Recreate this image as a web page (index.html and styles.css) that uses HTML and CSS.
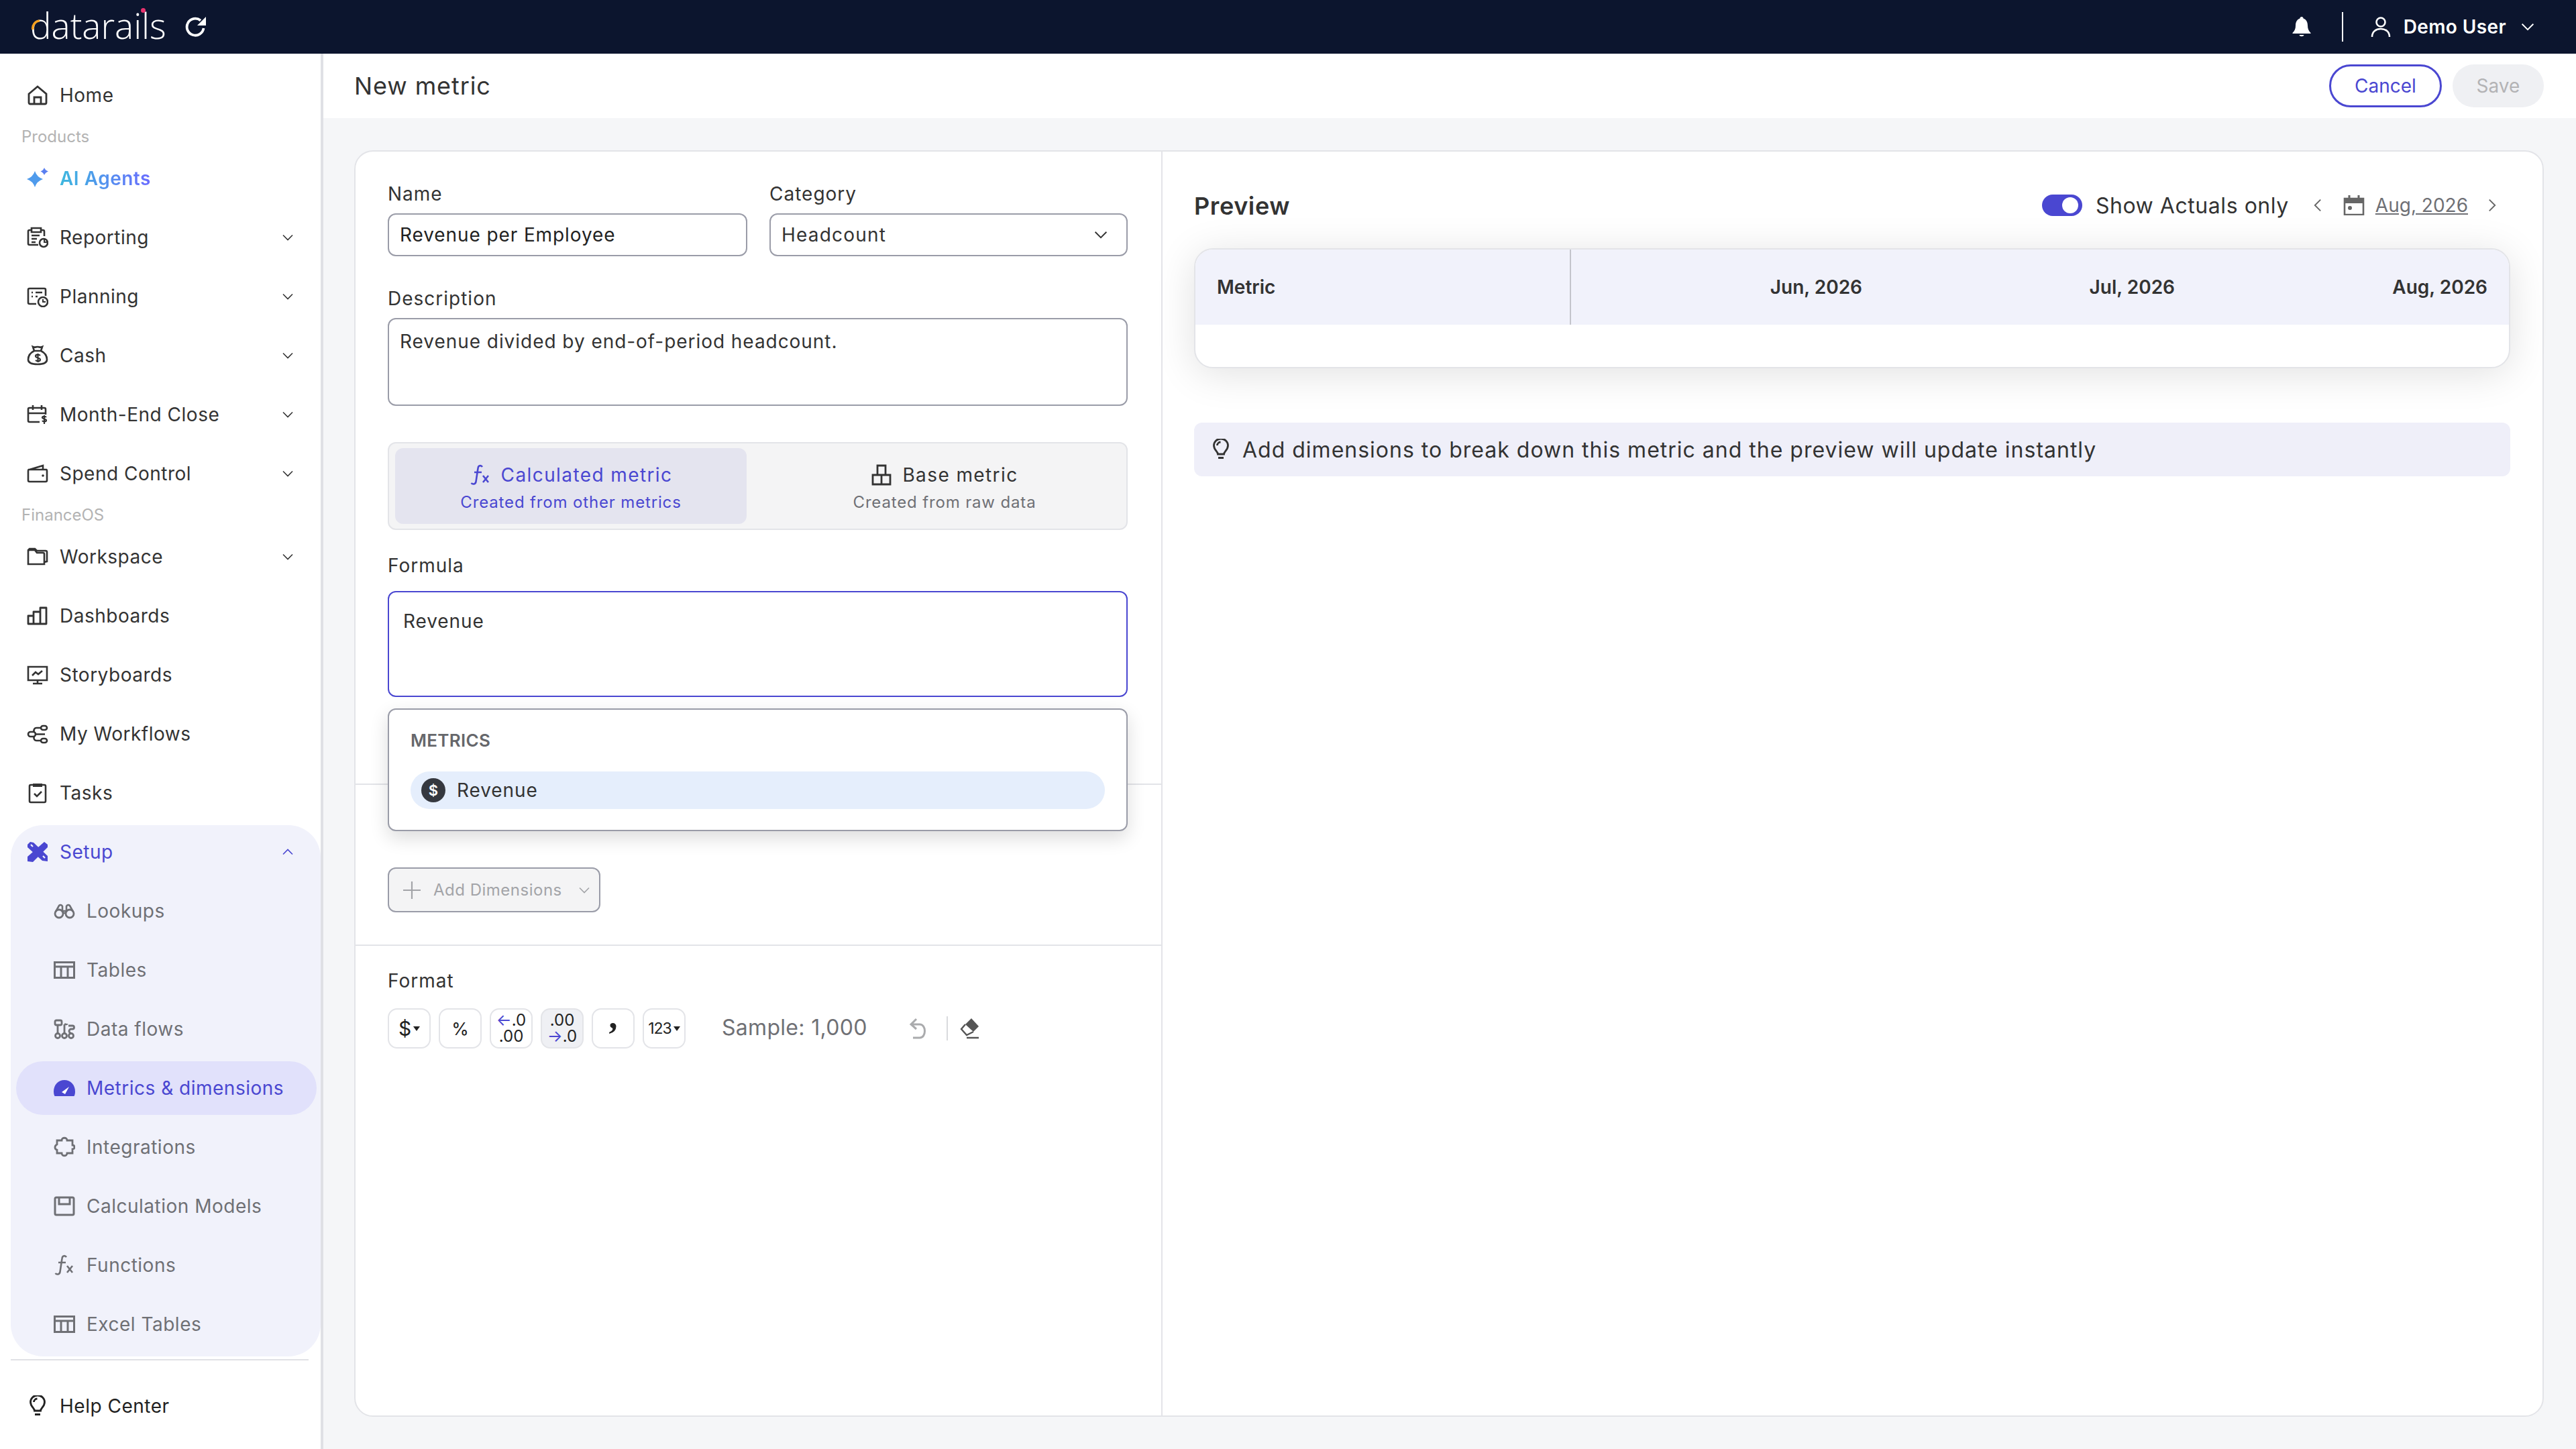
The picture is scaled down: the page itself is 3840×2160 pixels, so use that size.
FILE: index.html
```html
<!DOCTYPE html>
<html>
<head>
    <title>New metric</title>
    <link rel="stylesheet" href="styles.css">
</head>
<body>
    <svg class="defs" width="0" height="0">
        <defs>
            <symbol id="chev" viewBox="0 0 16 10"><path d="M1 1.500l7 7 7-7" fill="none" stroke="currentColor" stroke-width="1.600"/></symbol>
            <symbol id="table" viewBox="0 0 32 26"><path d="M1.500 1.500h29v23h-29zM1.500 8h29M11 8v16.500M21 8v16.500" fill="none" stroke="currentColor" stroke-width="3"/></symbol>
            <symbol id="fx" viewBox="0 0 32 32"><path d="M19 4c-2-3-6-2.500-6.500 2L9.500 26c-.6 4-5 4.500-7 2M7 12h11M20 17l8 10M28 17l-8 10" fill="none" stroke="currentColor" stroke-width="2.600"/></symbol>
            <symbol id="bulb" viewBox="0 0 24 32"><path d="M7.500 23c0-4-6-6-6-13a10.500 10 0 0 1 21 0c0 7-6 9-6 13zM8 28.500h8M6.500 10a5.500 5 0 0 1 5-5" fill="none" stroke="currentColor" stroke-width="2.800"/></symbol>
        </defs>
    </svg>

    <!-- Top bar -->
    <header class="topbar">
        <div class="logo">
            <span class="logo-word">datarails</span>
            <svg class="logo-arc" width="18" height="18" viewBox="0 0 18 18"><path d="M2 16a11 11 0 0 1 10-13" fill="none" stroke="#f5a01e" stroke-width="3.500"/></svg>
            <span class="logo-dot"></span>
            <svg class="logo-spin" width="32" height="32" viewBox="0 0 32 32"><path d="M27.500 18A12.500 12.500 0 1 1 23 6.500" fill="none" stroke="#fff" stroke-width="3.800"/><path d="M31 1v13H18z" fill="#fff"/></svg>
        </div>
        <div class="topbar-right">
            <svg class="bell" width="28" height="32" viewBox="0 0 28 32"><path d="M14 1c1.500 0 2.500 1 2.600 2.500C21 5 23 9 23 14c0 5 1.500 8 4.500 11v1H.5v-1C3.500 22 5 19 5 14c0-5 2-9 6.400-10.500C11.500 2 12.500 1 14 1zM10.500 28h7c-.5 3-6.500 3-7 0z" fill="#fff"/></svg>
            <span class="topbar-sep"></span>
            <svg class="user-icon" width="30" height="32" viewBox="0 0 30 32"><circle cx="15" cy="9" r="6.500" fill="none" stroke="#fff" stroke-width="2.600"/><path d="M2 31c0-8 6-12 13-12s13 4 13 12" fill="none" stroke="#fff" stroke-width="2.600"/></svg>
            <span class="user-name">Demo User</span>
            <svg class="user-chev"><use href="#chev"/></svg>
        </div>
    </header>

    <div class="app">
        <!-- Side menu -->
        <nav class="sidebar">
            <a class="nav-row">
                <svg class="ico" viewBox="0 0 32 32"><path d="M3 14L16 3l13 11v13a2 2 0 0 1-2 2H5a2 2 0 0 1-2-2zM11 29V19h10v10" fill="none" stroke="currentColor" stroke-width="2.800"/></svg>
                <span>Home</span>
            </a>
            <div class="nav-label">Products</div>
            <a class="nav-row ai">
                <svg class="ico" viewBox="0 0 32 32"><path d="M12 5Q15 14 24 17 15 20 12 29 9 20 0 17 9 14 12 5z" fill="#4f9bec"/><path d="M26 0q1.500 4 6 5.500-4.500 1.500-6 5.500-1.500-4-5.500-5.500Q24.500 4 26 0z" fill="#5a7ff0"/></svg>
                <span class="ai-text">AI Agents</span>
            </a>
            <a class="nav-row">
                <svg class="ico" viewBox="0 0 32 32"><path d="M17 27H4a2 2 0 0 1-2-2V7a2 2 0 0 1 2-2h3M21 5h3a2 2 0 0 1 2 2v7M7 2h14v6H7zM7 13h12M7 18h8M7 23h6" fill="none" stroke="currentColor" stroke-width="2.600"/><circle cx="25" cy="24" r="6" fill="none" stroke="currentColor" stroke-width="2.600"/><path d="M25 24h6v-2h-4v-4h-2z" fill="currentColor"/></svg>
                <span>Reporting</span>
                <svg class="chev"><use href="#chev"/></svg>
            </a>
            <a class="nav-row">
                <svg class="ico" viewBox="0 0 32 32"><path d="M14 27H4a2 2 0 0 1-2-2V6a2 2 0 0 1 2-2h22a2 2 0 0 1 2 2v9M7 10h2M13 10h10M7 16h2M13 16h3" fill="none" stroke="currentColor" stroke-width="2.600"/><circle cx="24" cy="24" r="7" fill="none" stroke="currentColor" stroke-width="2.600"/><path d="M24 20v4h4" fill="none" stroke="currentColor" stroke-width="2"/></svg>
                <span>Planning</span>
                <svg class="chev"><use href="#chev"/></svg>
            </a>
            <a class="nav-row">
                <svg class="ico" viewBox="0 0 32 32"><path d="M11 9L9 3c3 1.500 4 0 7 0s4 1.500 7 0l-2 6M11 9h10M11 9C5 12 2 17 2 22c0 5 4 7 14 7s14-2 14-7c0-5-3-10-9-13" fill="none" stroke="currentColor" stroke-width="2.600"/><path d="M20 16c-2-2-7-2-7 1s7 2 7 5-5 3-7 1M16.500 13v13" fill="none" stroke="currentColor" stroke-width="2.200"/></svg>
                <span>Cash</span>
                <svg class="chev"><use href="#chev"/></svg>
            </a>
            <a class="nav-row">
                <svg class="ico" viewBox="0 0 32 32"><path d="M19 27H4a2 2 0 0 1-2-2V8a2 2 0 0 1 2-2h22a2 2 0 0 1 2 2v8M2 14h26M9 2v7M22 2v7" fill="none" stroke="currentColor" stroke-width="2.600"/><path d="M29 20c-2-2-6-1.500-6 .5s6 1.500 6 4-5 2.500-6 .5M26 17v13" fill="none" stroke="currentColor" stroke-width="2.200"/></svg>
                <span>Month-End Close</span>
                <svg class="chev"><use href="#chev"/></svg>
            </a>
            <a class="nav-row">
                <svg class="ico" viewBox="0 0 32 32"><path d="M4 10l20-6v6M3 10h26a2 2 0 0 1 1 2v14a2 2 0 0 1-2 2H4a2 2 0 0 1-2-2V12a2 2 0 0 1 1-2z" fill="none" stroke="currentColor" stroke-width="2.600"/><circle cx="24" cy="19" r="1.800" fill="currentColor"/></svg>
                <span>Spend Control</span>
                <svg class="chev"><use href="#chev"/></svg>
            </a>
            <div class="nav-label">FinanceOS</div>
            <a class="nav-row">
                <svg class="ico" viewBox="0 0 32 32"><path d="M2 27V8a2 2 0 0 1 2-2h8l3 4h9a2 2 0 0 1 2 2v15zM2 8V6l2-2h8l3 3h13a2 2 0 0 1 2 2v14l-4 1" fill="none" stroke="currentColor" stroke-width="2.600"/></svg>
                <span>Workspace</span>
                <svg class="chev"><use href="#chev"/></svg>
            </a>
            <a class="nav-row">
                <svg class="ico" viewBox="0 0 32 32"><path d="M2 16h8v12H2zM10 10h10v18H10zM20 4h9v24h-9z" fill="none" stroke="currentColor" stroke-width="2.800" stroke-linejoin="round"/></svg>
                <span>Dashboards</span>
            </a>
            <a class="nav-row">
                <svg class="ico" viewBox="0 0 32 32"><path d="M2 4h28v20H2zM16 24v5M9 29h14M8 17l5-5 4 3 6-5" fill="none" stroke="currentColor" stroke-width="2.600"/></svg>
                <span>Storyboards</span>
            </a>
            <a class="nav-row">
                <svg class="ico" viewBox="0 0 32 32"><rect x="21" y="4" width="9" height="6" rx="3" fill="none" stroke="currentColor" stroke-width="2.600"/><rect x="21" y="23" width="9" height="6" rx="3" fill="none" stroke="currentColor" stroke-width="2.600"/><rect x="2" y="13" width="11" height="7" rx="3.500" fill="none" stroke="currentColor" stroke-width="2.600"/><path d="M21 7h-6a4 4 0 0 0-4 6M21 26h-6a4 4 0 0 1-4-6M13 16.500h14" fill="none" stroke="currentColor" stroke-width="2.600"/></svg>
                <span>My Workflows</span>
            </a>
            <a class="nav-row">
                <svg class="ico" viewBox="0 0 32 32"><path d="M6 4h20a2 2 0 0 1 2 2v22a2 2 0 0 1-2 2H6a2 2 0 0 1-2-2V6a2 2 0 0 1 2-2zM11 17l4 4 7-7" fill="none" stroke="currentColor" stroke-width="2.600"/><path d="M9 2h14v5H9z" fill="currentColor"/></svg>
                <span>Tasks</span>
            </a>

            <div class="setup">
                <a class="nav-row setup-head">
                    <svg class="ico" viewBox="0 0 32 32"><path d="M5 1l5 1 21 20v8l-8-1L1 9V5z" fill="#4a47d1"/><path d="M26 1l5 4v4L9 31l-8-1v-7z" fill="#4a47d1"/><path d="M6 5l3 3M24 22l3 3" stroke="#f1f2fb" stroke-width="2.200"/></svg>
                    <span>Setup</span>
                    <svg class="chev up"><use href="#chev"/></svg>
                </a>
                <a class="sub-row">
                    <svg class="ico" viewBox="0 0 32 24"><circle cx="8" cy="16" r="6" fill="none" stroke="currentColor" stroke-width="2.800"/><circle cx="24" cy="16" r="6" fill="none" stroke="currentColor" stroke-width="2.800"/><path d="M3 13l5-9a3 3 0 0 1 5 1v7h6V5a3 3 0 0 1 5-1l5 9M14 15h4" fill="none" stroke="currentColor" stroke-width="2.600"/></svg>
                    <span>Lookups</span>
                </a>
                <a class="sub-row">
                    <svg class="ico"><use href="#table"/></svg>
                    <span>Tables</span>
                </a>
                <a class="sub-row">
                    <svg class="ico" viewBox="0 0 32 32"><rect x="2" y="3" width="10" height="7" rx="2" fill="none" stroke="currentColor" stroke-width="2.800"/><circle cx="6" cy="26" r="3.500" fill="none" stroke="currentColor" stroke-width="2.800"/><circle cx="16" cy="26" r="3.500" fill="none" stroke="currentColor" stroke-width="2.800"/><circle cx="26" cy="26" r="3.500" fill="none" stroke="currentColor" stroke-width="2.800"/><path d="M6 10v12M16 9v13M16 9c3 0 4 0 4-1M22 11h6a2 2 0 0 1 0 5h-2a2 2 0 0 0 0 6" fill="none" stroke="currentColor" stroke-width="2.800"/></svg>
                    <span>Data flows</span>
                </a>
                <a class="sub-row current">
                    <svg class="ico" viewBox="0 0 32 24"><path d="M16 0C7 0 0 7 0 17c0 3 .5 5 1.500 7h29c1-2 1.500-4 1.500-7 0-10-7-17-16-17z" fill="#4a47d1"/><path d="M12 18l11-8-6 11z" fill="#fff"/></svg>
                    <span>Metrics &amp; dimensions</span>
                </a>
                <a class="sub-row">
                    <svg class="ico" viewBox="0 0 32 32"><path d="M12 6c0-5 8-5 8 0h8v7c4 0 4 6 0 6v6h-8c0 5-8 5-8 0H5v-5c-4-1-4-6 0-8V6z" fill="none" stroke="currentColor" stroke-width="2.800"/></svg>
                    <span>Integrations</span>
                </a>
                <a class="sub-row">
                    <svg class="ico" viewBox="0 0 32 32"><path d="M4 3h24a2 2 0 0 1 2 2v22a2 2 0 0 1-2 2H4a2 2 0 0 1-2-2V5a2 2 0 0 1 2-2zM8 3v10h16V3" fill="none" stroke="currentColor" stroke-width="3"/></svg>
                    <span>Calculation Models</span>
                </a>
                <a class="sub-row">
                    <svg class="ico"><use href="#fx"/></svg>
                    <span>Functions</span>
                </a>
                <a class="sub-row">
                    <svg class="ico"><use href="#table"/></svg>
                    <span>Excel Tables</span>
                </a>
            </div>
            <hr class="nav-hr">
            <a class="nav-row help">
                <svg class="ico"><use href="#bulb"/></svg>
                <span>Help Center</span>
            </a>
        </nav>

        <!-- Main area -->
        <main class="main">
            <div class="page-head">
                <h1 class="page-title">New metric</h1>
                <div class="head-btns">
                    <button class="btn-cancel">Cancel</button>
                    <button class="btn-save">Save</button>
                </div>
            </div>

            <div class="content">
                <div class="card">
                    <!-- Left: the form -->
                    <div class="form">
                        <div class="form-main">
                            <div class="two-col">
                                <div>
                                    <label class="lbl">Name</label>
                                    <div class="input">Revenue per Employee</div>
                                </div>
                                <div>
                                    <label class="lbl">Category</label>
                                    <div class="input select">
                                        <span>Headcount</span>
                                        <svg class="select-chev"><use href="#chev"/></svg>
                                    </div>
                                </div>
                            </div>
                            <label class="lbl desc-lbl">Description</label>
                            <div class="textarea">Revenue divided by end-of-period headcount.</div>

                            <div class="type-switch">
                                <div class="type-opt active">
                                    <div class="type-title">
                                        <svg class="type-fx"><use href="#fx"/></svg>
                                        <span>Calculated metric</span>
                                    </div>
                                    <div class="type-sub">Created from other metrics</div>
                                </div>
                                <div class="type-opt">
                                    <div class="type-title">
                                        <svg class="type-base" viewBox="0 0 32 32"><path d="M10 2h12v14H10zM3 16h26v14H3zM16 16v14" fill="none" stroke="currentColor" stroke-width="2.800"/></svg>
                                        <span>Base metric</span>
                                    </div>
                                    <div class="type-sub">Created from raw data</div>
                                </div>
                            </div>

                            <label class="lbl formula-lbl">Formula</label>
                            <div class="formula-wrap">
                                <div class="formula">Revenue</div>
                                <div class="suggest">
                                    <div class="suggest-head">METRICS</div>
                                    <div class="suggest-item">
                                        <span class="dollar">$</span>
                                        <span>Revenue</span>
                                    </div>
                                </div>
                            </div>
                        </div>

                        <div class="form-dims">
                            <button class="add-dims">
                                <svg class="plus" width="28" height="28" viewBox="0 0 28 28"><path d="M14 1v26M1 14h26" stroke="currentColor" stroke-width="2.200"/></svg>
                                <span>Add Dimensions</span>
                                <svg class="add-chev"><use href="#chev"/></svg>
                            </button>
                        </div>

                        <div class="form-format">
                            <label class="lbl">Format</label>
                            <div class="format-row">
                                <button class="fmt"><span class="fmt-big">$</span><i class="caret"></i></button>
                                <button class="fmt"><span class="fmt-mid">%</span></button>
                                <button class="fmt stack"><span><b>←</b>.0</span><span>.00</span></button>
                                <button class="fmt stack on"><span>.00</span><span><b>→</b>.0</span></button>
                                <button class="fmt"><span class="fmt-comma">,</span></button>
                                <button class="fmt"><span class="fmt-num">123</span><i class="caret"></i></button>
                                <span class="sample">Sample: 1,000</span>
                                <svg class="undo" width="26" height="32" viewBox="0 0 26 32"><path d="M11 2L3 10l8 7M3 10h13c10 0 10 20 0 20H6" fill="none" stroke="#aaabad" stroke-width="3"/></svg>
                                <span class="fmt-sep"></span>
                                <svg class="eraser" width="30" height="32" viewBox="0 0 30 32"><path d="M17 1l11 12-8 8L8 10z" fill="#555"/><path d="M8 10L2 17l8 9 10-5M10 30h18" fill="none" stroke="#555" stroke-width="2.400"/></svg>
                            </div>
                        </div>
                    </div>

                    <!-- Right: the preview -->
                    <div class="preview">
                        <div class="preview-head">
                            <h2 class="preview-title">Preview</h2>
                            <div class="preview-tools">
                                <span class="switch"><i></i></span>
                                <span class="actuals">Show Actuals only</span>
                                <svg class="pager left"><use href="#chev"/></svg>
                                <svg class="cal" width="32" height="30" viewBox="0 0 32 30"><path d="M2 5h28v24H2z" fill="none" stroke="#666" stroke-width="2.600"/><path d="M2 5h28v7H2z" fill="#666"/><circle cx="10" cy="19" r="3" fill="#666"/><path d="M9 0v7M23 0v7" stroke="#666" stroke-width="3"/></svg>
                                <span class="date">Aug, 2026</span>
                                <svg class="pager right"><use href="#chev"/></svg>
                            </div>
                        </div>

                        <div class="grid-card">
                            <div class="grid-head">
                                <div class="grid-metric">Metric</div>
                                <div class="grid-month">Jun, 2026</div>
                                <div class="grid-month">Jul, 2026</div>
                                <div class="grid-month">Aug, 2026</div>
                            </div>
                        </div>

                        <div class="hint">
                            <svg class="hint-ico"><use href="#bulb"/></svg>
                            <span>Add dimensions to break down this metric and the preview will update instantly</span>
                        </div>
                    </div>
                </div>
            </div>
        </main>
    </div>
</body>
</html>
```

FILE: styles.css
```css
* { box-sizing: border-box; }
html, body { margin: 0; height: 100%; }
body {
    font-family: Inter, "Open Sans", sans-serif;
    font-size: 28px;
    color: #333;
    overflow: hidden;
    background: #f5f6f8;
}
.defs { position: absolute; }
button { font-family: inherit; }

/* top bar */
.topbar {
    height: 80px;
    background: #0c152e;
    display: flex;
    align-items: center;
    justify-content: space-between;
    color: #fff;
}
.logo {
    position: relative;
    width: 320px;
    height: 80px;
}
.logo-word {
    position: absolute;
    left: 45px;
    top: 2px;
    font-family: "Open Sans", sans-serif;
    font-weight: 300;
    font-size: 53px;
    line-height: 72px;
}
.logo-arc { position: absolute; left: 47px; top: 28px; }
.logo-dot {
    position: absolute;
    left: 210px;
    top: 12px;
    width: 7px;
    height: 7px;
    border-radius: 50%;
    background: #e8326e;
}
.logo-spin { position: absolute; left: 276px; top: 24px; }
.topbar-right {
    display: flex;
    align-items: center;
    padding-right: 62px;
}
.topbar-sep {
    width: 2px;
    height: 44px;
    background: #fff;
    margin: 0 41px 0 46px;
}
.user-name {
    font-weight: 600;
    font-size: 28px;
    margin: 0 22px 0 19px;
    letter-spacing: .4px;
}
.user-chev { width: 20px; height: 12px; }

.app {
    display: flex;
    height: 2080px;
}

/* side menu */
.sidebar {
    width: 482px;
    flex: none;
    background: #fff;
    border-right: 4px solid #dfe0e5;
    padding-top: 18px;
}
.nav-row, .sub-row {
    display: flex;
    align-items: center;
    height: 88px;
    padding-left: 40px;
    color: #333;
    letter-spacing: .5px;
}
.nav-row .ico, .sub-row .ico {
    width: 32px;
    height: 32px;
    flex: none;
    margin-right: 17px;
}
.nav-label {
    height: 36px;
    line-height: 36px;
    padding-left: 32px;
    font-size: 24px;
    color: #b3b3b3;
}
.chev {
    width: 16px;
    height: 10px;
    margin-left: auto;
    margin-right: 41px;
}
.chev.up { transform: rotate(180deg); }
.ai { font-weight: 600; }
.ai-text {
    background: linear-gradient(90deg, #3db8de, #6a6cff);
    -webkit-background-clip: text;
    background-clip: text;
    color: transparent;
}
.setup {
    margin-top: 4px;
    height: 792px;
    background: #f1f2fb;
    border-radius: 48px;
    margin-left: 16px;
    padding-bottom: 4px;
}
.setup .nav-row { padding-left: 24px; }
.setup-head {
    height: 80px;
    margin-bottom: 4px;
}
.setup-head, .setup-head .chev { color: #4a47d1; }
.setup-head .chev { margin-right: 41px; }
.sub-row {
    padding-left: 64px;
    color: #6f7075;
}
.sub-row.current {
    height: 80px;
    margin: 4px 6px 4px 8px;
    padding-left: 56px;
    border-radius: 40px;
    background: #e1e1fb;
    color: #4a47d1;
}
.nav-hr {
    height: 2px;
    margin: 4px 18px 24px 16px;
    border: 0;
    background: #e0e1e5;
}
.help { color: #222; }

/* page header */
.main {
    flex: 1;
    display: flex;
    flex-direction: column;
}
.page-head {
    height: 96px;
    background: #fff;
    display: flex;
    align-items: center;
    justify-content: space-between;
    padding: 0 48px 0 46px;
}
.page-title {
    margin: 0;
    font-weight: 400;
    font-size: 36px;
    letter-spacing: .9px;
    color: #333;
}
.head-btns { display: flex; gap: 16px; }
.btn-cancel, .btn-save {
    height: 64px;
    border-radius: 32px;
    font-size: 28px;
}
.btn-cancel {
    width: 168px;
    background: #fff;
    border: 3px solid #4a47d1;
    color: #4a47d1;
}
.btn-save {
    width: 136px;
    background: #eff0f3;
    border: 0;
    color: #b3b3b5;
}

/* card */
.content {
    flex: 1;
    padding: 48px 48px 48px 46px;
    display: flex;
}
.card {
    flex: 1;
    display: flex;
    background: #fff;
    border: 2px solid #e3e4e8;
    border-radius: 28px;
}
.form {
    width: 1203px;
    flex: none;
    border-right: 2px solid #e3e4e8;
}
.form-main {
    height: 944px;
    padding: 43px 50px 0 48px;
    border-bottom: 2px solid #e3e4e8;
}
.two-col {
    display: grid;
    grid-template-columns: 536px 534px;
    gap: 33px;
}
.lbl {
    display: block;
    height: 40px;
    line-height: 40px;
    margin-bottom: 9px;
    color: #333;
    letter-spacing: 1px;
}
.input {
    height: 64px;
    border: 2px solid #9a9ca8;
    border-radius: 12px;
    padding: 0 16px;
    line-height: 60px;
    color: #222;
    letter-spacing: .9px;
}
.select {
    display: flex;
    align-items: center;
    justify-content: space-between;
    color: #333;
    letter-spacing: 1.200px;
}
.select-chev { width: 20px; height: 12px; margin-right: 12px; }
.desc-lbl { margin-top: 43px; }
.textarea {
    height: 131px;
    border: 2px solid #9a9ca8;
    border-radius: 12px;
    padding: 16px;
    letter-spacing: .95px;
    line-height: 34px;
}
.type-switch {
    margin-top: 54px;
    height: 131px;
    display: grid;
    grid-template-columns: 524px 1fr;
    gap: 33px;
    padding: 7px 9px;
    background: #f4f4f5;
    border: 2px solid #e3e4e8;
    border-radius: 12px;
}
.type-opt {
    border-radius: 12px;
    text-align: center;
    padding-top: 19px;
}
.type-opt.active {
    background: #e4e4ef;
    color: #4a47d1;
}
.type-title {
    display: flex;
    align-items: center;
    justify-content: center;
    gap: 15px;
    height: 42px;
    letter-spacing: 1.400px;
}
.type-fx { width: 32px; height: 36px; }
.type-base { width: 32px; height: 32px; }
.type-sub {
    margin-top: 5px;
    font-size: 24px;
    color: #6f7075;
    letter-spacing: .85px;
}
.active .type-sub { color: #4a47d1; }
.formula-lbl { margin: 33px 0 18px; }
.formula-wrap { position: relative; }
.formula {
    height: 158px;
    border: 2px solid #4a47d1;
    border-radius: 12px;
    padding: 26px 21px;
    line-height: 34px;
    letter-spacing: .9px;
}
.suggest {
    position: absolute;
    left: 0;
    right: 0;
    top: 175px;
    height: 183px;
    padding: 29px 32px;
    background: #fff;
    border: 2px solid #9a9ca8;
    border-radius: 12px;
    box-shadow: 0 10px 28px rgba(0, 0, 0, .14);
    z-index: 2;
}
.suggest-head {
    height: 34px;
    line-height: 34px;
    font-weight: 600;
    font-size: 26px;
    color: #66676b;
    letter-spacing: .3px;
}
.suggest-item {
    display: flex;
    align-items: center;
    height: 56px;
    margin-top: 29px;
    padding-left: 16px;
    border-radius: 28px;
    background: #e5eefc;
    letter-spacing: .9px;
}
.dollar {
    width: 36px;
    height: 36px;
    margin-right: 17px;
    border-radius: 50%;
    background: #35383f;
    color: #fff;
    font-size: 22px;
    font-weight: 600;
    line-height: 36px;
    text-align: center;
    letter-spacing: 0;
}
.form-dims {
    height: 240px;
    padding: 123px 48px 0;
    border-bottom: 2px solid #e3e4e8;
}
.add-dims {
    display: flex;
    align-items: center;
    width: 317px;
    height: 67px;
    padding: 0 14px 0 20px;
    background: #f4f4f5;
    border: 2px solid #9a9ca8;
    border-radius: 12px;
    color: #a3a4a8;
    font-size: 24px;
    letter-spacing: .5px;
}
.plus { margin-right: 18px; flex: none; }
.add-chev { width: 16px; height: 10px; margin-left: auto; flex: none; }
.form-format { padding: 32px 48px 0; }
.format-row {
    display: flex;
    align-items: center;
    gap: 12px;
    margin-top: -8px;
    padding-top: 20px;
}
.fmt {
    width: 64px;
    height: 60px;
    padding: 0;
    display: flex;
    align-items: center;
    justify-content: center;
    gap: 3px;
    background: #fff;
    border: 2px solid #e3e4e8;
    border-radius: 14px;
    color: #222;
    font-size: 26px;
}
.fmt.stack {
    flex-direction: column;
    gap: 0;
    font-size: 24px;
    line-height: 24px;
}
.fmt.on { background: #eff0f4; }
.fmt b { font-weight: 400; color: #4a47d1; }
.fmt-big { font-size: 30px; }
.fmt-mid { font-size: 26px; }
.fmt-comma {
    font-family: "Liberation Serif", serif;
    font-size: 52px;
    font-weight: 700;
    line-height: 30px;
    margin-top: -34px;
}
.fmt-num { font-size: 23px; letter-spacing: -1px; }
.caret {
    width: 0;
    height: 0;
    border-left: 5px solid transparent;
    border-right: 5px solid transparent;
    border-top: 7px solid #222;
}
.sample {
    margin: -3px 50px 0 42px;
    font-size: 32px;
    color: #6f7075;
    letter-spacing: .3px;
}
.undo { flex: none; }
.fmt-sep {
    width: 2px;
    height: 36px;
    background: #d9dadd;
    margin: 0 6px 0 18px;
}

/* preview */
.preview {
    flex: 1;
    padding: 0 48px 0 47px;
}
.preview-head {
    height: 144px;
    display: flex;
    align-items: center;
    justify-content: space-between;
    padding-top: 18px;
}
.preview-title {
    margin: 0;
    font-size: 36px;
    font-weight: 600;
    color: #333;
    letter-spacing: .6px;
}
.preview-tools {
    display: flex;
    align-items: center;
    margin-top: -2px;
}
.switch {
    position: relative;
    width: 60px;
    height: 32px;
    border-radius: 16px;
    background: #4a47d1;
    margin-right: 20px;
}
.switch i {
    position: absolute;
    right: 6px;
    top: 4px;
    width: 24px;
    height: 24px;
    border-radius: 50%;
    background: #fff;
}
.actuals { font-size: 32px; color: #333; letter-spacing: .55px; }
.pager { width: 22px; height: 12px; color: #666; }
.pager.left { transform: rotate(90deg); margin: 0 27px 0 32px; }
.pager.right { transform: rotate(-90deg); margin: 0 16px 0 25px; }
.cal { margin-right: 16px; flex: none; }
.date {
    color: #6f7075;
    text-decoration: underline;
}
.grid-card {
    height: 179px;
    border: 2px solid #e3e4e8;
    border-radius: 28px;
    overflow: hidden;
    background: #fff;
    box-shadow: 0 8px 60px rgba(0, 0, 0, .12);
}
.grid-head {
    height: 112px;
    display: grid;
    grid-template-columns: 560px repeat(3, 1fr);
    align-items: stretch;
    background: #f1f2fb;
    font-weight: 600;
    color: #333;
}
.grid-metric {
    display: flex;
    align-items: center;
    padding-left: 32px;
    border-right: 2px solid #c4c5cc;
}
.grid-month {
    display: flex;
    align-items: center;
    justify-content: flex-end;
    padding-right: 32px;
}
.hint {
    margin-top: 81px;
    height: 80px;
    display: flex;
    align-items: center;
    gap: 18px;
    padding-left: 26px;
    background: #efeff9;
    border-radius: 12px;
    font-size: 32px;
    color: #333;
    letter-spacing: 1px;
}
.hint-ico { width: 28px; height: 32px; }
```
